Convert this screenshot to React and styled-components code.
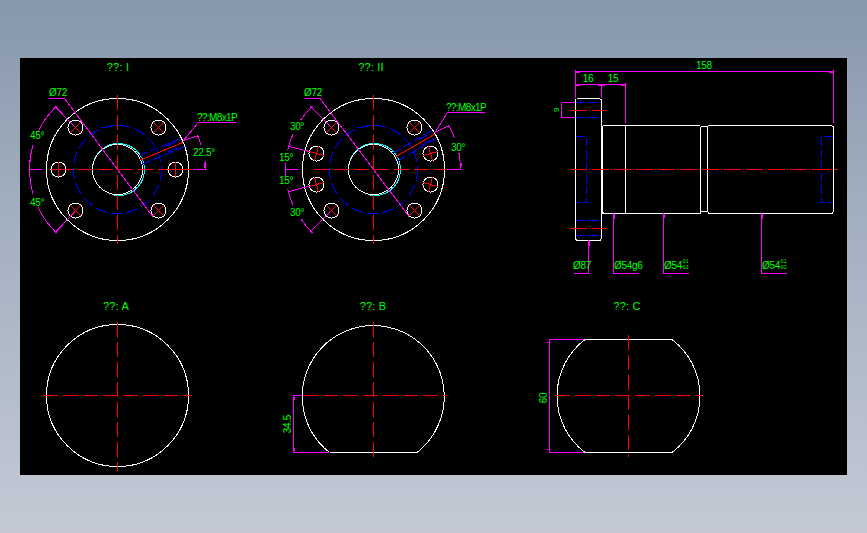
import styled, { createGlobalStyle } from "styled-components";

const GlobalStyle = createGlobalStyle`
  html, body {
    margin: 0;
    padding: 0;
  }
`;

const COLORS = {
  white: "#ffffff",
  red: "#ff0000",
  blue: "#0000ff",
  cyan: "#00ffff",
  magenta: "#ff00ff",
  green: "#00ff00",
};

const DASHES = {
  center: "15 5",
  centerDot: "17 2 1 2",
  hidden: "9 3",
  bolt: "12 4",
};

const Page = styled.div`
  box-sizing: border-box;
  width: 867px;
  height: 533px;
  padding: 58px 20px;
  background: linear-gradient(180deg, #8798ab 0%, #a2afc0 40%, #c4c9d5 100%);
  overflow: hidden;
`;

const Canvas = styled.div`
  width: 827px;
  height: 417px;
  background: #000000;
`;

const Drawing = styled.svg`
  display: block;
  width: 827px;
  height: 417px;
  shape-rendering: crispEdges;
`;

const Stroke = styled.path`
  fill: none;
  stroke-width: ${(props) => props.$w || 1};
  stroke: ${(props) => COLORS[props.$c || "white"]};
  stroke-dasharray: ${(props) => (props.$dash ? DASHES[props.$dash] : "none")};
`;

const Ring = styled.circle`
  fill: none;
  stroke-width: 1;
  stroke: ${(props) => COLORS[props.$c || "white"]};
  stroke-dasharray: ${(props) => (props.$dash ? DASHES[props.$dash] : "none")};
`;

const Label = styled.text`
  font-family: "Liberation Sans", Arial, sans-serif;
  font-size: ${(props) => props.$size || 10}px;
  fill: ${COLORS.green};
  text-anchor: ${(props) => props.$anchor || "middle"};
  letter-spacing: ${(props) => props.$track ?? -0.3}px;
`;

const Title = styled(Label)`
  font-size: 11px;
  letter-spacing: 0.2px;
`;

const polar = (cx, cy, r, deg) => {
  const a = (deg * Math.PI) / 180;
  return [cx + r * Math.cos(a), cy + r * Math.sin(a)];
};

// angles in degrees, clockwise on screen
const arc = (cx, cy, r, from, to) => {
  const [x0, y0] = polar(cx, cy, r, from);
  const [x1, y1] = polar(cx, cy, r, to);
  const large = Math.abs(to - from) > 180 ? 1 : 0;
  const sweep = to > from ? 1 : 0;
  return `M${x0} ${y0}A${r} ${r} 0 ${large} ${sweep} ${x1} ${y1}`;
};

const spoke = (cx, cy, r0, r1, deg, off = 0) => {
  const [x0, y0] = polar(cx, cy, r0, deg);
  const [x1, y1] = polar(cx, cy, r1, deg);
  const a = (deg * Math.PI) / 180;
  const ox = -Math.sin(a) * off;
  const oy = Math.cos(a) * off;
  return `M${x0 + ox} ${y0 + oy}L${x1 + ox} ${y1 + oy}`;
};

const BoltHole = ({ x, y, angles }) => (
  <>
    <Ring cx={x} cy={y} r={7.5} />
    {angles.map((deg) => (
      <Stroke key={deg} $c="red" d={spoke(x, y, 0, 7.5, deg)} />
    ))}
  </>
);

const X_CROSS = [45, 135, 225, 315];

const Flange = ({ cx, cy, holes, threadDeg }) => (
  <>
    <Ring cx={cx} cy={cy} r={71} />
    <Ring cx={cx} cy={cy} r={44} $c="blue" $dash="bolt" />
    <Stroke $c="cyan" d={arc(cx + 1, cy, 26, -175, 100)} />
    <Ring cx={cx} cy={cy} r={25} />
    <Stroke $c="red" $dash="center" d={`M${cx - 60} ${cy}H${cx + 74}`} />
    <Stroke $c="red" $dash="center" d={`M${cx} ${cy - 74.5}V${cy + 74.5}`} />
    {holes.map((hole) => (
      <BoltHole key={`${hole.x}-${hole.y}`} {...hole} />
    ))}
    <Stroke $c="red" d={spoke(cx, cy, 25, 71, -threadDeg)} />
    <Stroke $c="blue" $dash="hidden" d={spoke(cx, cy, 25, 70, -threadDeg, 4.5)} />
    <Stroke $c="blue" $dash="hidden" d={spoke(cx, cy, 25, 70, -threadDeg, -4.5)} />
    <Stroke $c="blue" d={spoke(cx, cy, 54, 64, -threadDeg, 3)} />
    <Stroke $c="blue" d={spoke(cx, cy, 54, 64, -threadDeg, -3)} />
  </>
);

const Leader = ({ d, tick }) => (
  <>
    <Stroke $c="magenta" d={d} />
    {tick && <Stroke $c="magenta" $w={2} d={tick} />}
  </>
);

const ViewOne = () => {
  const cx = 117.5;
  const cy = 169.5;
  const holes = [
    { x: 75.5, y: 127.5, angles: X_CROSS },
    { x: 158.5, y: 127.5, angles: X_CROSS },
    { x: 75.5, y: 210.5, angles: X_CROSS },
    { x: 158.5, y: 210.5, angles: X_CROSS },
    { x: 58.5, y: 169.5, angles: [0, 90, 180, 270] },
    { x: 175.5, y: 169.5, angles: [0, 90, 180, 270] },
  ];
  return (
    <>
      <Title x={118} y={71}>??: I</Title>
      <Flange cx={cx} cy={cy} holes={holes} threadDeg={22.5} />
      <Leader d="M49 98.5H64.5L153.5 217.5" />
      <Label x={49} y={96} $anchor="start">Ø72</Label>
      <Leader d="M55 106.5L75 127M55 232.5L75 212M29.5 169.5H42" />
      <Stroke $c="magenta" d={arc(cx, cy, 88, -134, -155)} />
      <Stroke $c="magenta" d={arc(cx, cy, 88, -164, -180)} />
      <Stroke $c="magenta" d={arc(cx, cy, 88, 134, 155)} />
      <Stroke $c="magenta" d={arc(cx, cy, 88, 164, 180)} />
      <Label x={37} y={139}>45°</Label>
      <Label x={37} y={206}>45°</Label>
      <Leader d="M198.5 122.5H236M198.5 122.5L183.5 140.5L198.5 135.5" />
      <Label x={217} y={121} $track={-0.6}>??:M8x1P</Label>
      <Stroke $c="magenta" d={arc(cx, cy, 87, -22.5, -16)} />
      <Leader d="M193 169.5H205.5V161" tick="M205 168V163" />
      <Label x={204} y={156}>22.5°</Label>
    </>
  );
};

const ViewTwo = () => {
  const cx = 373.5;
  const cy = 169.5;
  const holes = [
    { x: 331.5, y: 127.5, angles: X_CROSS },
    { x: 414.5, y: 127.5, angles: X_CROSS },
    { x: 331.5, y: 210.5, angles: X_CROSS },
    { x: 414.5, y: 210.5, angles: X_CROSS },
    { x: 316.5, y: 153.5, angles: [15, 105, 195, 285] },
    { x: 430.5, y: 153.5, angles: [-15, 75, 165, 255] },
    { x: 316.5, y: 184.5, angles: [-15, 75, 165, 255] },
    { x: 430.5, y: 184.5, angles: [15, 105, 195, 285] },
  ];
  return (
    <>
      <Title x={371} y={71}>??: II</Title>
      <Flange cx={cx} cy={cy} holes={holes} threadDeg={30} />
      <Leader d="M305 98.5H320L409 216.5" />
      <Label x={304} y={96} $anchor="start">Ø72</Label>
      <Leader d="M310.5 106.5L331 127M310.5 231.5L331 211M289 146.5L309.5 151.5M289 191.5L309.5 186M285.5 169.5H298" />
      <Stroke $c="magenta" d={arc(cx, cy, 88, -134, -146)} />
      <Stroke $c="magenta" d={arc(cx, cy, 88, -156, -167)} />
      <Stroke $c="magenta" d={arc(cx, cy, 88, -176, -180)} />
      <Stroke $c="magenta" d={arc(cx, cy, 88, 134, 146)} />
      <Stroke $c="magenta" d={arc(cx, cy, 88, 156, 167)} />
      <Stroke $c="magenta" d={arc(cx, cy, 88, 176, 180)} />
      <Label x={297} y={130}>30°</Label>
      <Label x={286} y={161}>15°</Label>
      <Label x={286} y={184}>15°</Label>
      <Label x={297} y={216}>30°</Label>
      <Leader d="M447.5 112.5H485M447.5 112.5L435 132.5L449.5 125.5" />
      <Label x={466} y={111} $track={-0.6}>??:M8x1P</Label>
      <Stroke $c="magenta" d={arc(cx, cy, 87, -30, -21)} />
      <Stroke $c="magenta" d={arc(cx, cy, 87, -11, -5)} />
      <Leader d="M446.5 169.5H460.5V163" tick="M460.5 166V163" />
      <Label x={458} y={151}>30°</Label>
    </>
  );
};

const SideView = () => (
  <>
    {/* flange */}
    <Stroke d="M577 98.5H599.5L601.5 100V238.5L600 240.5H577L575.5 239V98.5" />
    {/* body */}
    <Stroke d="M602.5 213.5V126.5L604 125.5H700M708 125.5H831L833.5 127V211.5L832 213.5H709L707.5 211.5H700.5V213.5H604L602.5 212" />
    <Stroke d="M625.5 125.5V213.5M700.5 126.5H707.5V211.5M700.5 126.5V213" />
    {/* hidden lines */}
    <Stroke $c="blue" $dash="hidden" d="M575.5 102.5H601M575.5 117.5H601M575.5 220.5H601M575.5 235.5H601" />
    <Stroke $c="blue" $dash="hidden" d="M575.5 136.5H586.5V202.5H575.5M833 136.5H821.5V202.5H833" />
    {/* center lines */}
    <Stroke $c="red" $dash="centerDot" d="M570 169.5H838" />
    <Stroke $c="red" $dash="centerDot" d="M570 110.5H606M570 228.5H606" />
    {/* dimensions */}
    <Leader
      d="M575.5 70V98M833.5 70V122.5M575.5 71.5H833.5M575.5 84.5H625.5M601.5 84V98M625.5 83V122.5M561.5 102.5H575M561.5 117.5H575M561.5 102.5V117.5"
      tick="M576 71.5H580M829 71.5H833M576 84.5H580M598 84.5H605M621 84.5H625"
    />
    <Label x={704} y={69}>158</Label>
    <Label x={588} y={82}>16</Label>
    <Label x={613} y={82}>15</Label>
    <Label x={559} y={110} $size={8} transform="rotate(-90 559 110)">9</Label>
    {/* leaders */}
    <Leader
      d="M588.5 240V273.5H574M613.5 213V273.5H639M663.5 213V273.5H689M761.5 213V273.5H787"
      tick="M588.5 241V246M614 214V219M664 214V218M761.5 214V219"
    />
    <Label x={573} y={269} $anchor="start">Ø87</Label>
    <Label x={614} y={269} $anchor="start">Ø54g6</Label>
    <Label x={664} y={269} $anchor="start">Ø54</Label>
    <Label x={682} y={262.5} $anchor="start" $size={4.5} $track={-0.4}>-0.1</Label>
    <Label x={682} y={269} $anchor="start" $size={4.5} $track={-0.4}>-0.3</Label>
    <Label x={762} y={269} $anchor="start">Ø54</Label>
    <Label x={780} y={262.5} $anchor="start" $size={4.5} $track={-0.4}>-0.1</Label>
    <Label x={780} y={269} $anchor="start" $size={4.5} $track={-0.4}>-0.2</Label>
  </>
);

const SectionCross = ({ cx, cy, x0, x1, y0, y1 }) => (
  <>
    <Stroke $c="red" $dash="center" d={`M${x0} ${cy}H${x1}`} />
    <Stroke $c="red" $dash="center" d={`M${cx} ${y0}V${y1}`} />
  </>
);

const SectionViews = () => (
  <>
    <Title x={116} y={310}>??: A</Title>
    <Ring cx={117.5} cy={395.5} r={71} />
    <SectionCross cx={117.5} cy={395.5} x0={43} x1={192} y0={322} y1={471} />

    <Title x={373} y={310}>??: B</Title>
    <Stroke d="M329.5 452.5A71 71 0 1 1 417 452.5H329.5" />
    <SectionCross cx={373.5} cy={395.5} x0={303} x1={447} y0={322} y1={457} />
    <Leader d="M292.5 395.5H302M293.5 395.5V452M292.5 452.5H329" tick="M294 397V400M294 448V451" />
    <Label x={291} y={424} transform="rotate(-90 291 424)">34.5</Label>

    <Title x={627} y={310}>??: C</Title>
    <Stroke d="M585 339.5H672A71 71 0 0 1 672 452.5H585A71 71 0 0 1 585 339.5" />
    <SectionCross cx={628.5} cy={395.5} x0={555} x1={703} y0={335} y1={457} />
    <Leader d="M548.5 339.5H584M549.5 339.5V452.5M548.5 452.5H584" tick="M548 342V343M548 449V450" />
    <Label x={547} y={398} transform="rotate(-90 547 398)">60</Label>
  </>
);

const App = () => (
  <>
    <GlobalStyle />
    <Page>
      <Canvas>
        <Drawing viewBox="20 58 827 417">
          <ViewOne />
          <ViewTwo />
          <SideView />
          <SectionViews />
        </Drawing>
      </Canvas>
    </Page>
  </>
);

export default App;
